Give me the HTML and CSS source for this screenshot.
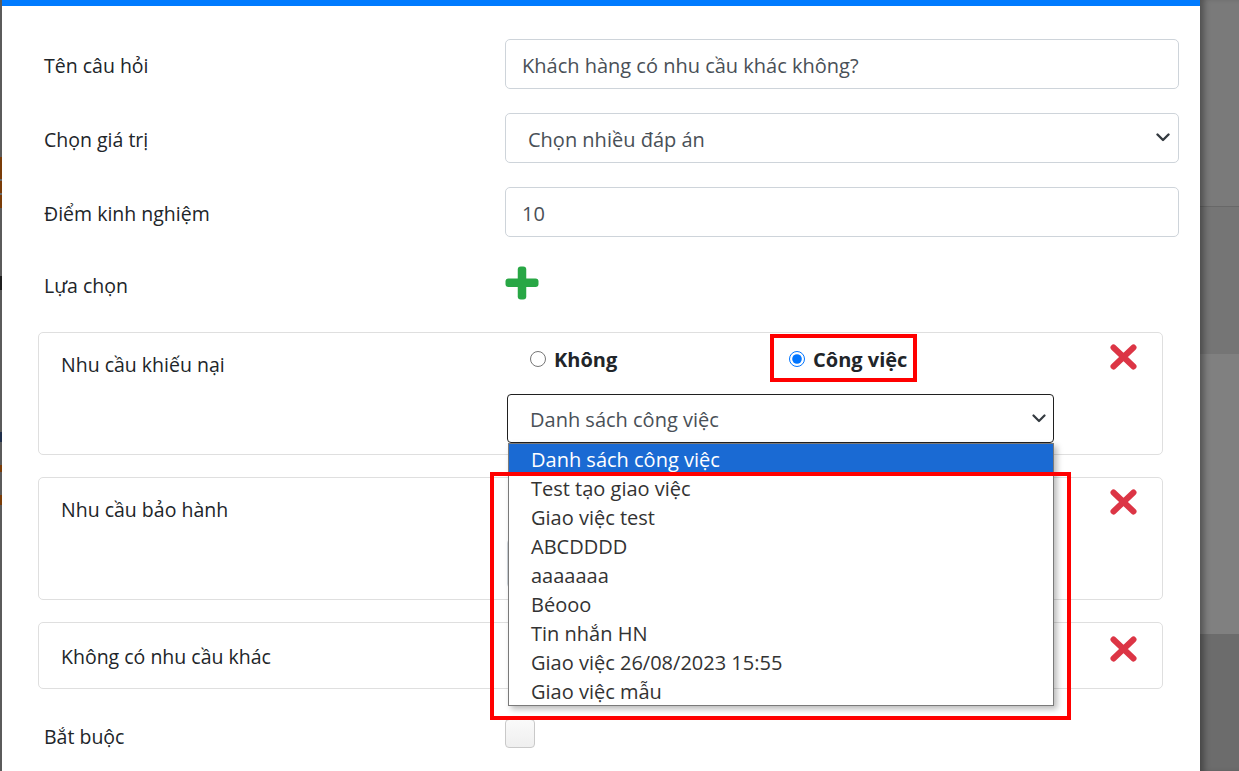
FILE: index.html
```html
<!DOCTYPE html>
<html lang="vi">
<head>
<meta charset="utf-8">
<title>Câu hỏi</title>
<link rel="stylesheet" href="styles.css">
</head>
<body>
<div class="screen">
  <div class="edge"></div>
  <div class="modal">
    <div class="form-row">
      <div class="label">Tên câu hỏi</div>
      <div class="control">Khách hàng có nhu cầu khác không?</div>
    </div>
    <div class="form-row">
      <div class="label">Chọn giá trị</div>
      <div class="control select">Chọn nhiều đáp án
        <svg class="chev" width="14" height="9" viewBox="0 0 14 9"><path d="M1.5 1.5 L7 7 L12.5 1.5" fill="none" stroke="#343a40" stroke-width="2.4" stroke-linecap="round" stroke-linejoin="round"/></svg>
      </div>
    </div>
    <div class="form-row">
      <div class="label">Điểm kinh nghiệm</div>
      <div class="control">10</div>
    </div>
    <div class="form-row plus-row">
      <div class="label">Lựa chọn</div>
      <div class="plus-cell">
        <svg width="34" height="34" viewBox="0 0 34 34"><rect x="0.5" y="12.5" width="33" height="8.5" rx="3" fill="#28a745"/><rect x="12.75" y="0.5" width="8.5" height="33" rx="3" fill="#28a745"/></svg>
      </div>
    </div>

    <div class="card">
      <div class="card-label">Nhu cầu khiếu nại</div>
      <div class="card-controls">
        <div class="radios">
          <label class="option first"><input type="radio" name="r1"><span>Không</span></label>
          <label class="option"><input type="radio" name="r1" checked><span>Công việc</span><span class="mark mark-radio"></span></label>
        </div>
        <div class="select-wrap">
          <div class="card-select focused"><span class="sel-text">Danh sách công việc</span>
            <svg class="chev chev-small" width="14" height="9" viewBox="0 0 14 9"><path d="M1.5 1.5 L7 7 L12.5 1.5" fill="none" stroke="#343a40" stroke-width="2.2" stroke-linecap="round" stroke-linejoin="round"/></svg>
          </div>
          <ul class="dropdown">
            <li class="active">Danh sách công việc</li>
            <li>Test tạo giao việc</li>
            <li>Giao việc test</li>
            <li>ABCDDDD</li>
            <li>aaaaaaa</li>
            <li>Béooo</li>
            <li>Tin nhắn HN</li>
            <li>Giao việc 26/08/2023 15:55</li>
            <li>Giao việc mẫu</li>
          </ul>
          <div class="mark mark-list"></div>
        </div>
      </div>
      <div class="card-x"><svg width="27" height="26" viewBox="0 0 27 26"><path d="M3.5 3.5 L23.5 22.5 M23.5 3.5 L3.5 22.5" stroke="#dc3545" stroke-width="6" stroke-linecap="round"/></svg></div>
    </div>

    <div class="card">
      <div class="card-label">Nhu cầu bảo hành</div>
      <div class="card-controls">
        <div class="radios"></div>
        <div class="select-wrap">
          <div class="card-select"></div>
        </div>
      </div>
      <div class="card-x"><svg width="27" height="26" viewBox="0 0 27 26"><path d="M3.5 3.5 L23.5 22.5 M23.5 3.5 L3.5 22.5" stroke="#dc3545" stroke-width="6" stroke-linecap="round"/></svg></div>
    </div>

    <div class="card card-short">
      <div class="card-label">Không có nhu cầu khác</div>
      <div class="card-controls">
        <div class="radios"></div>
      </div>
      <div class="card-x"><svg width="27" height="26" viewBox="0 0 27 26"><path d="M3.5 3.5 L23.5 22.5 M23.5 3.5 L3.5 22.5" stroke="#dc3545" stroke-width="6" stroke-linecap="round"/></svg></div>
    </div>

    <div class="form-row check-row">
      <div class="label">Bắt buộc</div>
      <div class="check-cell"><span class="checkbox"></span></div>
    </div>
  </div>
  <div class="backdrop"></div>
</div>
</body>
</html>
```

FILE: styles.css
```css
* { box-sizing: border-box; }
html, body {
  margin: 0;
  height: 100%;
  overflow: hidden;
}
body {
  font-family: "Open Sans", "Noto Sans", sans-serif;
  font-size: 20px;
  color: #212529;
  background: #777;
}
.screen {
  display: flex;
  height: 771px;
}
.edge {
  width: 2px;
  flex: none;
  background: linear-gradient(to bottom,
    #5b5b5b 0 157px, #7a3c08 157px 179px, #6a6a6a 179px 181px, #7a3c08 181px 193px,
    #6a6a6a 193px 195px, #7a3c08 195px 208px, #5b5b5b 208px 276px, #1f1f1f 276px 290px,
    #5b5b5b 290px 432px, #1e2e4a 432px 442px, #5b5b5b 442px 465px, #7a3c08 465px 472px,
    #5b5b5b 472px 495px, #7a3c08 495px 505px, #5b5b5b 505px);
}
.modal {
  width: 1198px;
  flex: none;
  background: #fff;
  border-top: 6px solid #007bff;
  padding-top: 33px;
  position: relative;
}
.backdrop {
  flex: 1;
  background: linear-gradient(to bottom,
    #7a7a7a 0 206px, #686868 206px 207px, #757575 207px 354px,
    #808080 354px 634px, #6c6c6c 634px);
  box-shadow: inset 7px 0 6px -3px rgba(0, 0, 0, .35);
}

/* form rows */
.form-row {
  display: grid;
  grid-template-columns: 461px 674px;
  align-items: center;
  height: 50px;
  margin: 0 0 24px 42px;
}
.label {
  font-size: 19.5px;
  line-height: 28px;
  padding-top: 3px;
}
.control {
  height: 50px;
  border: 1px solid #ced4da;
  border-radius: 5px;
  padding: 3px 0 0 16px;
  display: flex;
  align-items: center;
  color: #495057;
  position: relative;
}
.control.select {
  padding-left: 22px;
}
.chev {
  position: absolute;
  right: 8px;
  top: 50%;
  margin-top: -5px;
}
.chev-small {
  right: 7px;
}
.plus-row {
  margin-bottom: 21px;
}
.plus-row .label {
  padding-top: 0;
}
.plus-cell {
  align-self: start;
  margin-top: 5px;
  height: 34px;
}
.plus-cell svg { display: block; }

/* cards */
.card {
  display: grid;
  grid-template-columns: 468px 547px 1fr;
  width: 1125px;
  margin: 0 0 22px 36px;
  border: 1px solid #dfdfdf;
  border-radius: 5px;
}
.card-label {
  font-size: 19.5px;
  padding: 18px 0 19px 22px;
  line-height: 28px;
}
.card-short .card-label {
  padding: 20px 0 17px 22px;
}
.card-controls {
  padding: 7px 0 11px;
}
.card-short .card-controls {
  padding-bottom: 0;
}
.radios {
  display: flex;
  align-items: center;
  height: 36px;
  padding: 2px 0 0 23px;
}
.option {
  display: flex;
  align-items: center;
  gap: 8px;
  font-weight: 700;
  position: relative;
}
.option.first {
  width: 259px;
}
.option input {
  width: 16px;
  height: 16px;
  margin: 0;
}
.select-wrap {
  position: relative;
  margin-top: 18px;
}
.card-select {
  height: 49px;
  border: 1px solid #ced4da;
  border-radius: 4px;
  padding: 2px 0 0 22px;
  display: flex;
  align-items: center;
  color: #495057;
  position: relative;
}
.card-select.focused {
  border-color: #202020;
}
.card-x {
  padding: 11px 0 0 56px;
}
.card-short .card-x {
  padding-top: 13px;
}
.card-x svg { display: block; }

/* native-looking dropdown list */
.dropdown {
  position: absolute;
  top: 49px;
  left: 1px;
  width: 546px;
  margin: 0;
  padding: 0;
  list-style: none;
  background: #fff;
  border: 1px solid #7a7a7a;
  box-shadow: 3px 3px 6px rgba(0, 0, 0, .28);
  z-index: 5;
}
.dropdown li {
  height: 29px;
  line-height: 29px;
  padding: 1px 0 0 22px;
  color: #333;
}
.dropdown li.active {
  background: #1a6ad3;
  color: #fff;
}

/* red annotation boxes */
.mark {
  position: absolute;
  border: 4px solid #ff0000;
  z-index: 6;
}
.mark-radio {
  left: -19px;
  top: -12px;
  width: 147px;
  height: 48px;
}
.mark-list {
  left: -17px;
  top: 78px;
  width: 581px;
  height: 248px;
}

/* checkbox row */
.check-row {
  height: 50px;
  margin-bottom: 0;
}
.check-row .label {
  padding-top: 1px;
}
.check-cell {
  align-self: start;
  margin-top: 8px;
}
.checkbox {
  display: block;
  width: 30px;
  height: 29px;
  border: 1px solid #c9c9c9;
  border-radius: 4px;
  background: linear-gradient(#fafafa, #efefef);
}
```
